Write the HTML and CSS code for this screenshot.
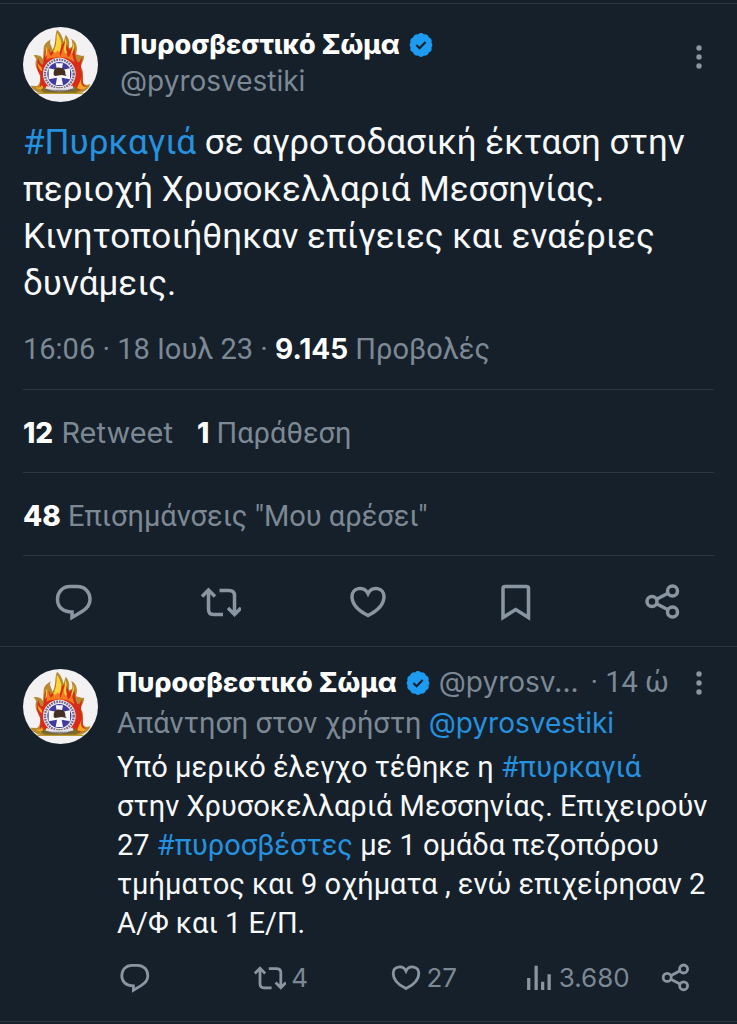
FILE: index.html
```html
<!DOCTYPE html>
<html lang="el">

<head>
  <meta charset="UTF-8">
  <meta name="viewport" content="width=device-width, initial-scale=1.0">
  <title>Πυροσβεστικό Σώμα</title>
  <link rel="stylesheet" href="styles.css">
</head>

<body>
  <svg class="sprite" width="0" height="0" aria-hidden="true">
    <symbol id="crest" viewBox="24 21 225 225">
      <rect x="24" y="21" width="225" height="225" fill="#f3f1f2" />
      <path fill="#b58a30" d="M82 219C62 218 50 205 47 197L66 198C78 190 76 172 73 158C62 146 59 130 64 118L56 105C73 105 80 108 84 118L86 84C88 68 102 62 108 58C100 70 111 78 112 89C124 76 118 47 126 29C138 38 142 51 146 65L152 44C163 56 164 66 162 83C176 86 173 64 168 56C186 65 189 84 183 103C195 105 205 112 207 105C209 120 199 129 197 142C208 151 203 175 204 188C212 199 221 193 226 193C221 209 204 218 190 219Z" />
      <path fill="#d92b1a" d="M84 210C68 204 79 190 76 167C66 151 62 137 70 114C76 135 83 138 85 128L89 96C95 80 106 84 105 100L116 90C124 78 121 61 127 44L140 74L152 62L162 90L177 80C182 102 180 115 188 126C194 131 196 117 203 111C197 132 197 145 201 155C205 182 199 194 216 202L192 212Z" />
      <path fill="#f47b20" d="M94 119C98 107 93 91 102 78C98 94 106 104 108 108C116 98 126 86 126 66C130 85 136 96 136 110L148 72C147 88 157 93 158 112C169 108 166 98 171 88C170 108 176 113 178 127C165 115 151 111 136 113C119 111 105 113 94 119Z" />
      <path fill="#fbd638" d="M114 94C126 79 123 53 126 38C137 55 143 72 137 86C136 96 131 99 127 90C125 98 119 102 114 94ZM150 55C160 68 150 84 155 94C158 104 148 101 148 92C145 81 151 71 150 55ZM94 84C98 75 98 91 95 105L91 112ZM174 69C181 80 174 94 171 103C167 94 176 83 174 69Z" />
      <path fill="#f3a51f" d="M80 194C76 207 66 201 61 202C74 214 87 207 87 207ZM201 170C193 191 203 201 216 201C205 213 190 207 186 204ZM68 128C74 141 84 139 81 154C73 147 68 141 68 128Z" />
      <circle cx="133" cy="162" r="49" fill="#eceaf0" />
      <circle cx="133" cy="162" r="43" fill="none" stroke="#6d6488" stroke-width="7" stroke-dasharray="5 3" />
      <circle cx="133" cy="162" r="36" fill="#423b9d" />
      <path fill="#f8f8fb" d="M122 130h22l-4 20 25-5v33l-25-5 4 22h-22l4-22-25 5v-33l25 5Z" />
      <path fill="#443023" d="M116 164C115 144 127 142 134 143C146 142 153 152 151 163L155 168L140 165L120 168Z" />
      <path fill="#806c24" d="M77 209L91 200L109 207L133 202L159 207L178 199L193 210L181 220L90 220Z" />
      <path fill="none" stroke="#e4e0e6" stroke-width="9" d="M93 202Q133 217 174 201" />
      <path fill="none" stroke="#625d70" stroke-width="5" stroke-dasharray="4 2" d="M94 209L112 212L155 212L173 208" />
      <path fill="none" stroke="#b89b2c" stroke-width="4" d="M64 220H206" />
    </symbol>
    <symbol id="verified" viewBox="0 0 24 24">
      <path fill="#1d9bf0" d="M9 1.4a4 4 0 0 1 6 0 4 4 0 0 1 4.9 3.1 4 4 0 0 1 2.5 5.1 4 4 0 0 1 0 4.9 4 4 0 0 1-2.6 5 4 4 0 0 1-4.8 3.1 4 4 0 0 1-6 0 4 4 0 0 1-4.8-3.1 4 4 0 0 1-2.6-5 4 4 0 0 1 0-4.9 4 4 0 0 1 2.5-5.1A4 4 0 0 1 9 1.4Z" />
      <path fill="none" stroke="#16202a" stroke-width="2.2" d="M7.4 12l3.2 3.2 6-6.1" />
    </symbol>
    <symbol id="more" viewBox="0 0 6 24">
      <circle cx="3" cy="3" r="2.7" />
      <circle cx="3" cy="12" r="2.7" />
      <circle cx="3" cy="21" r="2.7" />
    </symbol>
    <symbol id="reply" viewBox="0 0 40 40">
      <path class="line" d="M16 5.500h7C31 5.500 36 11 36 18.500c0 6-3 9-8 12L18 36.500v-5.500C8.500 31 3.500 25.500 3.500 18.500 3.500 11 8.500 5.500 16 5.500Z" />
    </symbol>
    <symbol id="retweet" viewBox="0 0 40 40">
      <path class="line" d="M1 15.500l6.500-6.500 6.500 6.500M7.500 10v18.500q0 5 5 5H22M18.500 9.500H28q5.500 0 5.500 5V33M27 27l6.500 6.500 6.500-6.500" />
    </symbol>
    <symbol id="like" viewBox="0 0 40 40">
      <path class="line" d="M20 34.500C13 31 4 24.500 4 15.500c0-9 12-11 16-3C24 4.500 36 6.500 36 15.500c0 9-9 15.500-16 19Z" />
    </symbol>
    <symbol id="bookmark" viewBox="0 0 40 40">
      <path class="line" d="M7 36.500V7.500Q7 5.500 9 5.500h21.500Q32.500 5.500 32.500 7.500V36.500L19.700 28.500Z" />
    </symbol>
    <symbol id="share" viewBox="0 0 40 40">
      <path class="line" d="M14 18l10.500-5.500M14 23l10.500 5.500" />
      <circle class="line" cx="9" cy="20.500" r="5" />
      <circle class="line" cx="29.500" cy="10" r="5" />
      <circle class="line" cx="29.500" cy="31" r="5" />
    </symbol>
    <symbol id="views" viewBox="0 0 28 32">
      <path class="line" d="M4 17v13M12 4v26M19 21v9M26 13v17" />
    </symbol>
  </svg>

  <main>
    <article class="tweet">
      <header class="author">
        <svg class="avatar"><use href="#crest" /></svg>
        <div class="names">
          <div class="name-row">
            <a class="name" href="#">Πυροσβεστικό Σώμα</a>
            <svg class="verified"><use href="#verified" /></svg>
          </div>
          <a class="handle" href="#">@pyrosvestiki</a>
        </div>
        <button class="more" aria-label="Περισσότερα"><svg><use href="#more" /></svg></button>
      </header>
      <p class="text"><a href="#">#Πυρκαγιά</a> σε αγροτοδασική έκταση στην<br>περιοχή Χρυσοκελλαριά Μεσσηνίας.<br>Κινητοποιήθηκαν επίγειες και εναέριες<br>δυνάμεις.</p>
      <p class="meta">16:06 · 18 Ιουλ 23 · <b>9.145</b> Προβολές</p>
      <div class="stats"><span class="retweets"><b>12</b> Retweet</span><span><b>1</b> Παράθεση</span></div>
      <div class="stats"><span><b>48</b> Επισημάνσεις "Μου αρέσει"</span></div>
      <div class="actions">
        <button aria-label="Απάντηση"><svg><use href="#reply" /></svg></button>
        <button aria-label="Retweet"><svg><use href="#retweet" /></svg></button>
        <button aria-label="Μου αρέσει"><svg><use href="#like" /></svg></button>
        <button aria-label="Σελιδοδείκτης"><svg><use href="#bookmark" /></svg></button>
        <button aria-label="Κοινοποίηση"><svg><use href="#share" /></svg></button>
      </div>
    </article>

    <article class="reply">
      <svg class="avatar"><use href="#crest" /></svg>
      <div class="reply-body">
        <header class="reply-head">
          <a class="name" href="#">Πυροσβεστικό Σώμα</a>
          <svg class="verified"><use href="#verified" /></svg>
          <a class="handle" href="#">@pyrosv...</a>
          <span class="time">· 14 ώ</span>
          <button class="more" aria-label="Περισσότερα"><svg><use href="#more" /></svg></button>
        </header>
        <p class="context">Απάντηση στον χρήστη <a class="mention" href="#">@pyrosvestiki</a></p>
        <p class="reply-text">Υπό μερικό έλεγχο τέθηκε η <a href="#">#πυρκαγιά</a><br>στην Χρυσοκελλαριά Μεσσηνίας. Επιχειρούν<br>27 <a href="#">#πυροσβέστες</a> με 1 ομάδα πεζοπόρου<br>τμήματος και 9 οχήματα , ενώ επιχείρησαν 2<br>Α/Φ και 1 Ε/Π.</p>
        <div class="reply-actions">
          <button aria-label="Απάντηση"><svg><use href="#reply" /></svg></button>
          <button><svg><use href="#retweet" /></svg>4</button>
          <button><svg><use href="#like" /></svg>27</button>
          <button class="views"><svg><use href="#views" /></svg>3.680</button>
          <button aria-label="Κοινοποίηση"><svg><use href="#share" /></svg></button>
        </div>
      </div>
    </article>
  </main>
</body>

</html>
```

FILE: styles.css
```css
:root {
  --bg: #16202a;
  --muted: #7c8995;
  --icon: #8996a2;
  --line: #2c3741;
  --blue: #2591df;
}

body {
  margin: 0;
  background: var(--bg);
  color: #f7f9fa;
  font-family: Roboto, sans-serif;
  font-size: 29px;
}

main {
  padding-top: 3px;
}

p {
  margin: 0;
  white-space: nowrap;
}

a {
  color: var(--blue);
  text-decoration: none;
}

b {
  color: #fff;
  font-family: Inter, sans-serif;
  font-size: 28px;
  font-weight: 700;
}

button {
  display: flex;
  align-items: center;
  padding: 0;
  border: none;
  background: none;
  color: var(--muted);
  font: inherit;
  cursor: pointer;
}

svg {
  flex: none;
  fill: var(--icon);
}

.sprite {
  position: absolute;
}

.line {
  fill: none;
  stroke: var(--icon);
  stroke-width: 3.5;
}

.avatar {
  width: 75px;
  height: 75px;
  border-radius: 50%;
}

.verified {
  width: 24px;
  height: 24px;
}

.name {
  color: #fff;
  font-family: Inter, sans-serif;
  font-size: 27px;
  font-weight: 800;
  white-space: nowrap;
}

.handle,
.mention {
  font-family: Inter, sans-serif;
  font-size: 28px;
}

.handle {
  color: var(--muted);
}

.more svg {
  width: 6px;
  height: 24px;
}

/* main tweet */

.tweet {
  border-top: 1px solid var(--line);
  border-bottom: 1px solid var(--line);
}

.author {
  display: flex;
  gap: 22px;
  padding: 23px 35px 0 23px;
}

.names {
  flex: 1;
  line-height: 36px;
}

.name-row {
  display: flex;
  align-items: center;
  gap: 9px;
}

.author .more {
  align-self: flex-start;
  padding-top: 18px;
}

.text {
  padding: 17px 23px 0;
  font-size: 35px;
  line-height: 47px;
}

.meta {
  margin: 0 23px;
  padding: 25px 0 23px;
  border-bottom: 1px solid var(--line);
  color: var(--muted);
  line-height: 34px;
}

.stats {
  display: flex;
  gap: 24px;
  margin: 0 23px;
  padding: 26px 0 22px;
  border-bottom: 1px solid var(--line);
  color: var(--muted);
  line-height: 34px;
}

.stats b {
  font-weight: 800;
}

.retweets {
  font-family: Inter, sans-serif;
}

.actions {
  display: grid;
  grid-template-columns: repeat(5, 1fr);
  justify-items: center;
  padding: 25px 0;
}

.actions svg {
  width: 40px;
  height: 40px;
}

/* reply */

.reply {
  display: flex;
  gap: 19px;
  padding: 16px 23px 28px;
  border-bottom: 1px solid var(--line);
}

.reply .avatar {
  margin-top: 6px;
}

.reply-body {
  flex: 1;
  min-width: 0;
}

.reply-head {
  display: flex;
  align-items: center;
  gap: 9px;
  line-height: 39px;
  padding-right: 12px;
  white-space: nowrap;
}

.time {
  margin-left: auto;
  color: var(--muted);
}

.reply-head .more {
  margin-left: 18px;
}

.context {
  padding-top: 2px;
  color: var(--muted);
  line-height: 39px;
}

.reply-text {
  padding-top: 5px;
  line-height: 39px;
}

.reply-actions {
  display: grid;
  grid-template-columns: repeat(4, 1fr) auto;
  padding: 18px 22px 0 2px;
  font-family: Inter, sans-serif;
  font-size: 26px;
}

.reply-actions button {
  gap: 5px;
}

.reply-actions svg {
  width: 32px;
  height: 32px;
}

.reply-actions .views {
  gap: 8px;
}

.reply-actions .views svg {
  width: 26px;
  height: 30px;
}
```
